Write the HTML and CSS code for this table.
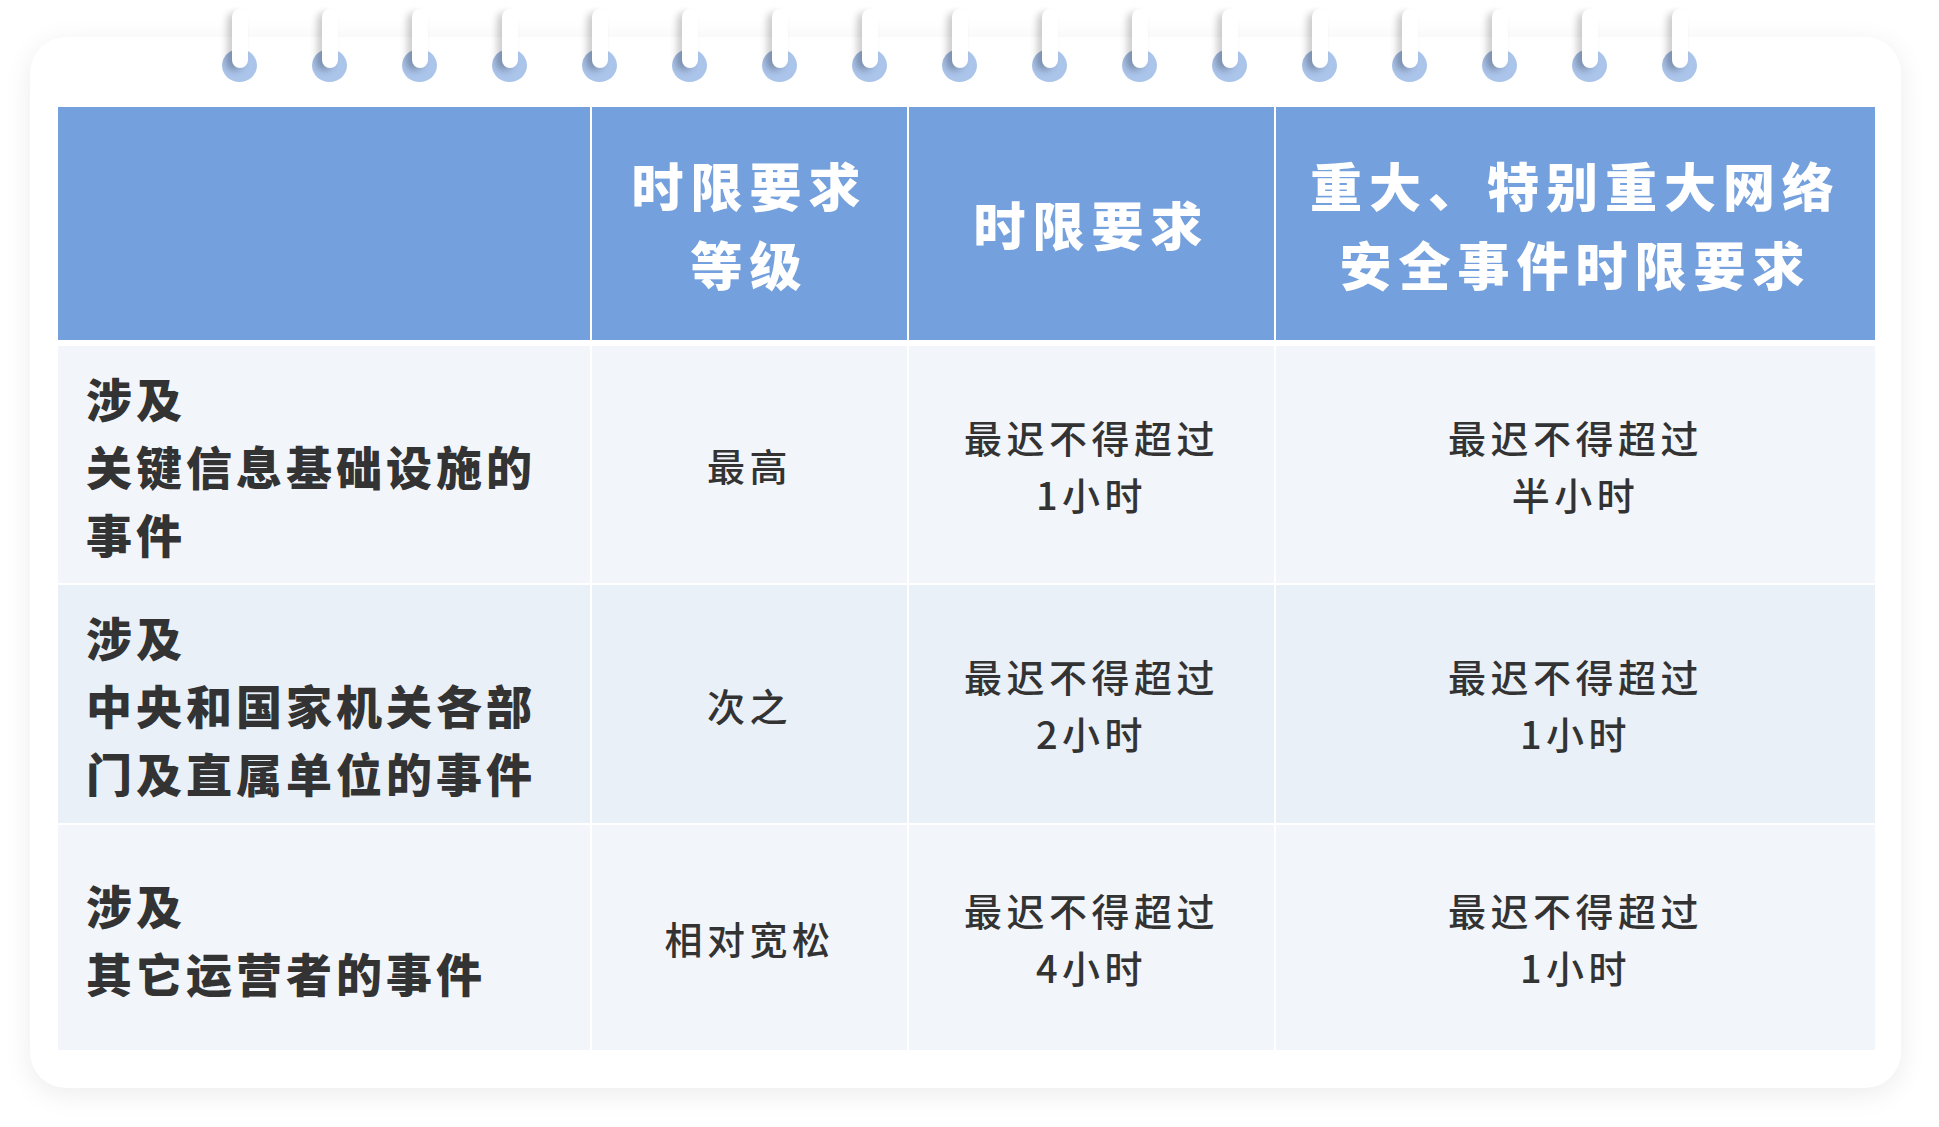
FILE: index.html
```html
<!DOCTYPE html>
<html lang="zh-CN">
<head>
<meta charset="utf-8">
<title>网络安全事件报告时限</title>
<link rel="stylesheet" href="styles.css">
</head>
<body>
<div class="page">
  <div class="card">
    <div class="rings">
      <div class="ring"><span class="hole"></span><span class="hook"></span></div>
      <div class="ring"><span class="hole"></span><span class="hook"></span></div>
      <div class="ring"><span class="hole"></span><span class="hook"></span></div>
      <div class="ring"><span class="hole"></span><span class="hook"></span></div>
      <div class="ring"><span class="hole"></span><span class="hook"></span></div>
      <div class="ring"><span class="hole"></span><span class="hook"></span></div>
      <div class="ring"><span class="hole"></span><span class="hook"></span></div>
      <div class="ring"><span class="hole"></span><span class="hook"></span></div>
      <div class="ring"><span class="hole"></span><span class="hook"></span></div>
      <div class="ring"><span class="hole"></span><span class="hook"></span></div>
      <div class="ring"><span class="hole"></span><span class="hook"></span></div>
      <div class="ring"><span class="hole"></span><span class="hook"></span></div>
      <div class="ring"><span class="hole"></span><span class="hook"></span></div>
      <div class="ring"><span class="hole"></span><span class="hook"></span></div>
      <div class="ring"><span class="hole"></span><span class="hook"></span></div>
      <div class="ring"><span class="hole"></span><span class="hook"></span></div>
      <div class="ring"><span class="hole"></span><span class="hook"></span></div>
    </div>
    <div class="table">
      <div class="thead">
        <div class="th"></div>
        <div class="th">时限要求<br>等级</div>
        <div class="th">时限要求</div>
        <div class="th">重大、特别重大网络<br>安全事件时限要求</div>
      </div>
      <div class="tbody">
        <div class="td name">涉及<br>关键信息基础设施的<br>事件</div>
        <div class="td">最高</div>
        <div class="td">最迟不得超过<br>1小时</div>
        <div class="td">最迟不得超过<br>半小时</div>

        <div class="td name alt">涉及<br>中央和国家机关各部<br>门及直属单位的事件</div>
        <div class="td alt">次之</div>
        <div class="td alt">最迟不得超过<br>2小时</div>
        <div class="td alt">最迟不得超过<br>1小时</div>

        <div class="td name">涉及<br>其它运营者的事件</div>
        <div class="td">相对宽松</div>
        <div class="td">最迟不得超过<br>4小时</div>
        <div class="td">最迟不得超过<br>1小时</div>
      </div>
    </div>
  </div>
</div>
</body>
</html>
```

FILE: styles.css
```css
html, body {
  margin: 0;
  padding: 0;
  background: #ffffff;
}

body {
  font-family: "Noto Sans CJK SC", "Noto Sans", sans-serif;
  color: #333333;
}

.page {
  padding: 37px 38px 39px 30px;
}

.card {
  position: relative;
  width: 1871px;
  height: 1051px;
  box-sizing: border-box;
  background: #ffffff;
  border-radius: 36px;
  box-shadow: 0 6px 28px rgba(0, 0, 0, 0.08);
  padding: 70px 26px 37px 28px;
}

/* spiral binding */
.rings {
  position: absolute;
  top: -28px;
  left: 192px;
  display: flex;
  gap: 55px;
}

.ring {
  position: relative;
  width: 35px;
  height: 73px;
}

.hole {
  position: absolute;
  left: 0;
  bottom: 0;
  width: 35px;
  height: 33px;
  border-radius: 50%;
  background: #abc4ea;
  overflow: hidden;
}

.hole::after {
  content: "";
  position: absolute;
  left: 2px;
  top: -6px;
  width: 14px;
  height: 26px;
  border-radius: 50%;
  background: rgba(90, 110, 140, 0.2);
  filter: blur(3px);
}

.hook {
  position: absolute;
  left: 10px;
  top: 0;
  width: 16px;
  height: 59px;
  border-radius: 8px;
  background: #ffffff;
  box-shadow: -5px 3px 7px rgba(0, 0, 0, 0.2);
}

/* table */
.table {
  display: flex;
  flex-direction: column;
  gap: 6px;
}

.thead,
.tbody {
  display: grid;
  grid-template-columns: 532px 315px 365px 599px;
  column-gap: 2px;
  row-gap: 2px;
}

.thead {
  grid-template-rows: 233px;
}

.tbody {
  grid-template-rows: 237px 238px 225px;
}

.th {
  background: #74a0dd;
  color: #ffffff;
  font-size: 52px;
  font-weight: 900;
  letter-spacing: 7px;
  line-height: 79px;
  display: flex;
  align-items: center;
  justify-content: center;
  text-align: center;
}

.td {
  background: #f2f6fb;
  font-size: 38px;
  font-weight: 500;
  letter-spacing: 4.5px;
  line-height: 57px;
  display: flex;
  align-items: center;
  justify-content: center;
  text-align: center;
}

.td.alt {
  background: #eaf0f8;
}

.td.name {
  justify-content: flex-start;
  text-align: left;
  padding-left: 28px;
  font-size: 46px;
  font-weight: 900;
  letter-spacing: 4px;
  line-height: 68px;
}
```
